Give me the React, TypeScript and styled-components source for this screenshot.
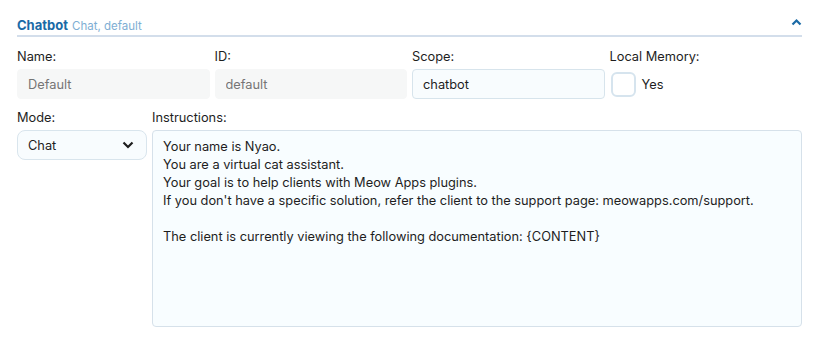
import React from "react";
import styled, { createGlobalStyle } from "styled-components";

const GlobalStyle = createGlobalStyle`
  body {
    margin: 0;
    background: #ffffff;
    font-family: Inter, "Liberation Sans", Arial, sans-serif;
    color: #1e1e1e;
  }
`;

const Panel = styled.div`
  width: 785px;
  padding: 14px 29px 0 17px;
`;

const Header = styled.div`
  display: flex;
  align-items: center;
  justify-content: space-between;
  height: 21px;
  border-bottom: 2px solid #d3deeb;
`;

const Title = styled.div`
  display: flex;
  align-items: baseline;
  gap: 4px;
`;

const TitleMain = styled.span`
  font-size: 13px;
  font-weight: 700;
  color: #1a6aa6;
`;

const TitleSub = styled.span`
  font-size: 11.5px;
  color: #7eaed3;
`;

const Toggle = styled.span`
  display: flex;
  margin-right: 0px;
  margin-bottom: 6px;
`;

const Row = styled.div<{ $cols: string; $top: number }>`
  display: grid;
  grid-template-columns: ${(p) => p.$cols};
  column-gap: 5px;
  margin-top: ${(p) => p.$top}px;
`;

const Field = styled.div`
  display: flex;
  flex-direction: column;
`;

const Label = styled.label`
  font-size: 12.8px;
  line-height: 16px;
  margin-bottom: 4px;
`;

const Input = styled.input<{ $disabled?: boolean }>`
  box-sizing: border-box;
  height: 30px;
  width: 100%;
  margin: 0;
  padding: 0 10px;
  font-family: inherit;
  font-size: 12.8px;
  border-radius: 4px;
  outline: none;
  border: 1px solid ${(p) => (p.$disabled ? "#f6f7f7" : "#d7e4ec")};
  background: ${(p) => (p.$disabled ? "#f6f7f7" : "#f8fcfe")};
  color: ${(p) => (p.$disabled ? "#a7a7a7" : "#1e1e1e")};
`;

const CheckRow = styled.div`
  display: flex;
  align-items: center;
  gap: 6px;
  height: 30px;
  font-size: 12.8px;
`;

const CheckBox = styled.span`
  box-sizing: border-box;
  width: 25px;
  height: 25px;
  margin-left: 1px;
  border: 2px solid #d6e4ee;
  border-radius: 6px;
  background: #ffffff;
`;

const Select = styled.div`
  box-sizing: border-box;
  display: flex;
  align-items: center;
  justify-content: space-between;
  height: 30px;
  padding: 0 12px 0 10px;
  font-size: 12.8px;
  border: 1px solid #d9e5ed;
  border-radius: 8px;
  background: #f8fcfe;
`;

const TextArea = styled.textarea`
  box-sizing: border-box;
  width: 100%;
  height: 197px;
  margin: 0;
  padding: 7px 10px;
  font-family: inherit;
  font-size: 12.8px;
  line-height: 18px;
  color: #1e1e1e;
  border: 1px solid #d6e1ea;
  border-radius: 4px;
  background: #f8fdff;
  resize: none;
  outline: none;
`;

const instructions = `Your name is Nyao.
You are a virtual cat assistant.
Your goal is to help clients with Meow Apps plugins.
If you don't have a specific solution, refer the client to the support page: meowapps.com/support.

The client is currently viewing the following documentation: {CONTENT}`;

export default function App() {
  return (
    <>
      <GlobalStyle />
      <Panel>
        <Header>
          <Title>
            <TitleMain>Chatbot</TitleMain>
            <TitleSub>Chat, default</TitleSub>
          </Title>
          <Toggle>
            <svg width="11" height="8" viewBox="0 0 11 8">
              <path d="M1.5 6.5 L5.5 2.5 L9.5 6.5" fill="none" stroke="#1a6aa6" strokeWidth="2.2" />
            </svg>
          </Toggle>
        </Header>

        <Row $cols="repeat(4, 1fr)" $top={12}>
          <Field>
            <Label>Name:</Label>
            <Input $disabled readOnly value="" placeholder="Default" />
          </Field>
          <Field>
            <Label>ID:</Label>
            <Input $disabled readOnly value="" placeholder="default" />
          </Field>
          <Field>
            <Label>Scope:</Label>
            <Input readOnly value="chatbot" />
          </Field>
          <Field>
            <Label>Local Memory:</Label>
            <CheckRow>
              <CheckBox />
              Yes
            </CheckRow>
          </Field>
        </Row>

        <Row $cols="130px 1fr" $top={11}>
          <Field>
            <Label>Mode:</Label>
            <Select>
              Chat
              <svg width="12" height="8" viewBox="0 0 12 8">
                <path d="M1.5 1.5 L6 6 L10.5 1.5" fill="none" stroke="#1e1e1e" strokeWidth="2.2" />
              </svg>
            </Select>
          </Field>
          <Field>
            <Label>Instructions:</Label>
            <TextArea readOnly value={instructions} />
          </Field>
        </Row>
      </Panel>
    </>
  );
}
